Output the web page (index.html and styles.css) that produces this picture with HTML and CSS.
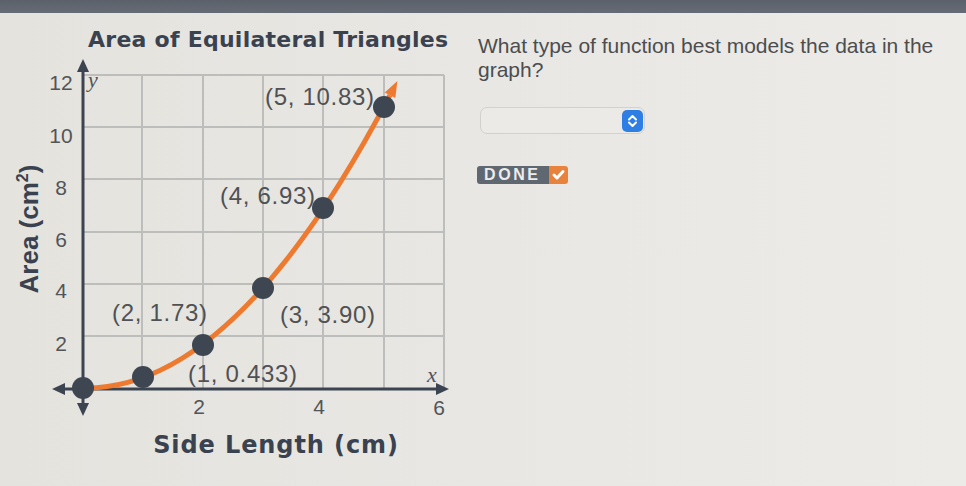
FILE: index.html
```html
<!DOCTYPE html>
<html lang="en">
<head>
<meta charset="utf-8">
<title>Area of Equilateral Triangles</title>
<link rel="stylesheet" href="styles.css">
</head>
<body>
<div class="topbar"></div>
<main class="layout">
  <section class="chart">
    <h1 class="chart-title">Area of Equilateral Triangles</h1>
    <svg class="plot" viewBox="0 53 466 433" width="466" height="433" xmlns="http://www.w3.org/2000/svg">
      <g class="grid">
        <line x1="142" y1="75" x2="142" y2="388"/>
        <line x1="203" y1="75" x2="203" y2="388"/>
        <line x1="263" y1="75" x2="263" y2="388"/>
        <line x1="323" y1="75" x2="323" y2="388"/>
        <line x1="384" y1="75" x2="384" y2="388"/>
        <line x1="444" y1="75" x2="444" y2="388"/>
        <line x1="83" y1="75" x2="444" y2="75"/>
        <line x1="83" y1="127" x2="444" y2="127"/>
        <line x1="83" y1="179" x2="444" y2="179"/>
        <line x1="83" y1="232" x2="444" y2="232"/>
        <line x1="83" y1="284" x2="444" y2="284"/>
        <line x1="83" y1="336" x2="444" y2="336"/>
      </g>
      <g class="axes">
        <line class="axis" x1="83" y1="70" x2="83" y2="406"/>
        <line class="axis" x1="62" y1="389" x2="438" y2="389"/>
        <polygon class="arrow" points="83,59 77,72 89,72"/>
        <polygon class="arrow" points="83,416 77,403 89,403"/>
        <polygon class="arrow" points="52,389 65,383 65,395"/>
        <polygon class="arrow" points="449,389 436,383 436,395"/>
      </g>
      <path class="curve" d="M86 388 Q236.5 388 390 95.2"/>
      <polygon class="curve-head" points="397.4,81 395.3,98 384.7,92.4"/>
      <g class="points">
        <circle cx="83" cy="388" r="11"/>
        <circle cx="143" cy="377" r="11"/>
        <circle cx="203" cy="345" r="11"/>
        <circle cx="263" cy="288" r="11"/>
        <circle cx="323" cy="208" r="11"/>
        <circle cx="384" cy="107" r="11"/>
      </g>
      <g class="point-labels">
        <text x="265" y="105">(5, 10.83)</text>
        <text x="220" y="204">(4, 6.93)</text>
        <text x="112" y="321">(2, 1.73)</text>
        <text x="280" y="323">(3, 3.90)</text>
        <text x="188" y="382">(1, 0.433)</text>
      </g>
      <g class="ticks">
        <text x="61" y="90">12</text>
        <text x="61" y="143">10</text>
        <text x="61" y="195">8</text>
        <text x="61" y="247">6</text>
        <text x="61" y="298">4</text>
        <text x="61" y="351">2</text>
        <text x="199" y="414">2</text>
        <text x="319" y="414">4</text>
        <text x="439" y="415">6</text>
      </g>
      <text class="var" x="88" y="87">y</text>
      <text class="var" x="427" y="382">x</text>
      <text class="x-title" x="276" y="453">Side Length (cm)</text>
      <text class="y-title" transform="translate(38 229) rotate(-90)">Area (cm<tspan class="sup" dy="-10">2</tspan><tspan dy="10">)</tspan></text>
    </svg>
  </section>
  <section class="question">
    <p class="prompt">What type of function best models the data in the graph?</p>
    <div class="select">
      <span class="select-btn">
        <svg viewBox="0 0 21 22" width="21" height="22"><polyline points="7,9.5 10.5,6 14,9.5"/><polyline points="7,12.5 10.5,16 14,12.5"/></svg>
      </span>
    </div>
    <button class="done" type="button"><span class="done-label">DONE</span><span class="done-check"><svg viewBox="0 0 19 18" width="19" height="18"><polyline points="5,9 8,12 14,5.5"/></svg></span></button>
  </section>
</main>
</body>
</html>
```

FILE: styles.css
```css
html, body {
  margin: 0;
  padding: 0;
}
body {
  width: 966px;
  height: 486px;
  overflow: hidden;
  background: linear-gradient(to right, #e4e3de 0%, #e8e7e3 50%, #ecebe7 100%);
  font-family: "Liberation Sans", Arial, sans-serif;
}
.topbar {
  height: 13px;
  background: linear-gradient(to bottom, #5a616b, #666c75);
}
.layout {
  display: grid;
  grid-template-columns: 466px 1fr;
  height: 473px;
}
.chart {
  display: flex;
  flex-direction: column;
}
.chart-title {
  margin: 14px 0 0 0;
  padding-left: 88px;
  font-family: "DejaVu Sans", sans-serif;
  font-weight: bold;
  font-size: 22px;
  line-height: 26px;
  letter-spacing: 0.25px;
  color: #3a4250;
  white-space: nowrap;
}
.plot {
  display: block;
}
.grid line {
  stroke: #bdbdbc;
  stroke-width: 2;
}
.axis {
  stroke: #3b4450;
  stroke-width: 3;
}
.arrow {
  fill: #3b4450;
}
.curve {
  fill: none;
  stroke: #ee7a30;
  stroke-width: 5;
}
.curve-head {
  fill: #ee7a30;
}
.points circle {
  fill: #3e4751;
}
.point-labels text {
  font-family: "Liberation Sans", Arial, sans-serif;
  font-size: 24px;
  letter-spacing: 0.7px;
  fill: #505154;
}
.ticks text {
  font-family: "Liberation Sans", Arial, sans-serif;
  font-size: 21px;
  fill: #535457;
  text-anchor: middle;
}
.var {
  font-family: "Liberation Serif", serif;
  font-style: italic;
  font-size: 22px;
  fill: #535457;
}
.x-title {
  font-family: "DejaVu Sans", sans-serif;
  font-weight: bold;
  font-size: 24px;
  letter-spacing: 0.9px;
  fill: #3a4250;
  text-anchor: middle;
}
.y-title {
  font-family: "Liberation Sans", Arial, sans-serif;
  font-weight: bold;
  font-size: 26px;
  fill: #3a4250;
  text-anchor: middle;
}
.y-title .sup {
  font-size: 16px;
}
.question {
  padding: 21px 0 0 12px;
  display: flex;
  flex-direction: column;
  align-items: flex-start;
}
.prompt {
  margin: 0;
  width: 480px;
  font-size: 21px;
  line-height: 24px;
  color: #4c4d50;
}
.select {
  margin: 25px 0 0 2px;
  width: 165px;
  height: 27px;
  box-sizing: border-box;
  border: 1px solid #d2d1ce;
  border-radius: 7px;
  background: #ebeae6;
  display: flex;
  justify-content: flex-end;
  align-items: center;
  padding-right: 1px;
}
.select-btn {
  width: 21px;
  height: 22px;
  border-radius: 5px;
  background: #2f7ee4;
  display: block;
}
.select-btn svg {
  display: block;
}
.select-btn polyline {
  fill: none;
  stroke: #ffffff;
  stroke-width: 2;
  stroke-linecap: round;
  stroke-linejoin: round;
}
.done {
  margin-top: 32px;
  margin-left: -1px;
  padding: 0;
  border: none;
  border-radius: 3px;
  overflow: hidden;
  display: flex;
  height: 18px;
  background: none;
  cursor: pointer;
}
.done-label {
  width: 72px;
  box-sizing: border-box;
  padding-left: 7px;
  background: #5f6771;
  color: #ececec;
  font-family: "Liberation Sans", Arial, sans-serif;
  font-weight: bold;
  font-size: 16px;
  line-height: 18px;
  letter-spacing: 2.6px;
  text-align: left;
}
.done-check {
  width: 19px;
  height: 18px;
  background: #e8833e;
  display: block;
}
.done-check svg {
  display: block;
}
.done-check polyline {
  fill: none;
  stroke: #ffffff;
  stroke-width: 3;
  stroke-linecap: round;
  stroke-linejoin: round;
}
```
